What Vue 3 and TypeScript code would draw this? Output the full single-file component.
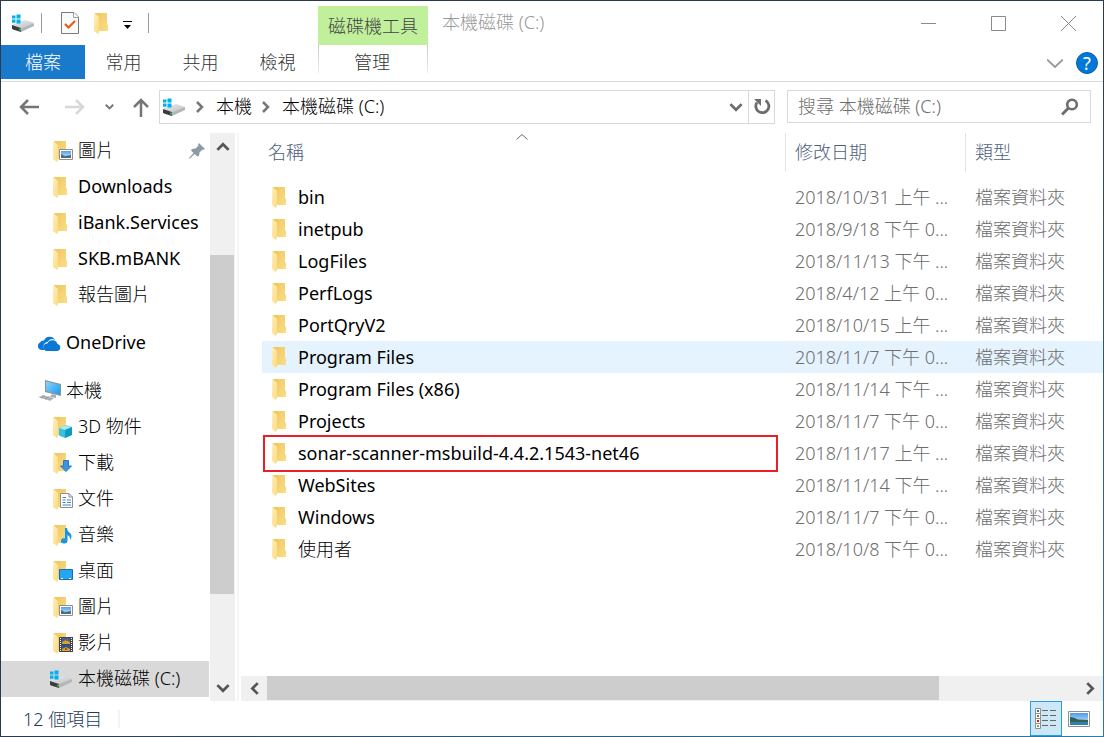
<script setup lang="ts">
import { ref } from 'vue'

interface TreeItem {
  label: string
  icon: string
  level: 1 | 2
  overlay?: string
  pinned?: boolean
  spaced?: boolean
  drive?: boolean
}

interface FileRow {
  name: string
  date: string
}

const menuTabs: string[] = ['常用', '共用', '檢視']

const tree: TreeItem[] = [
  { label: '圖片', icon: 'folder', level: 2, overlay: 'ov-picture', pinned: true },
  { label: 'Downloads', icon: 'folder', level: 2 },
  { label: 'iBank.Services', icon: 'folder', level: 2 },
  { label: 'SKB.mBANK', icon: 'folder', level: 2 },
  { label: '報告圖片', icon: 'folder', level: 2 },
  { label: 'OneDrive', icon: 'cloud', level: 1, spaced: true },
  { label: '本機', icon: 'pc', level: 1, spaced: true },
  { label: '3D 物件', icon: 'folder', level: 2, overlay: 'ov-cube' },
  { label: '下載', icon: 'folder', level: 2, overlay: 'ov-down' },
  { label: '文件', icon: 'folder', level: 2, overlay: 'ov-doc' },
  { label: '音樂', icon: 'folder', level: 2, overlay: 'ov-music' },
  { label: '桌面', icon: 'folder', level: 2, overlay: 'ov-desktop' },
  { label: '圖片', icon: 'folder', level: 2, overlay: 'ov-picture' },
  { label: '影片', icon: 'folder', level: 2, overlay: 'ov-film' },
  { label: '本機磁碟 (C:)', icon: 'drive', level: 2, drive: true },
]

const rows: FileRow[] = [
  { name: 'bin', date: '2018/10/31 上午 ...' },
  { name: 'inetpub', date: '2018/9/18 下午 0...' },
  { name: 'LogFiles', date: '2018/11/13 下午 ...' },
  { name: 'PerfLogs', date: '2018/4/12 上午 0...' },
  { name: 'PortQryV2', date: '2018/10/15 上午 ...' },
  { name: 'Program Files', date: '2018/11/7 下午 0...' },
  { name: 'Program Files (x86)', date: '2018/11/14 下午 ...' },
  { name: 'Projects', date: '2018/11/7 下午 0...' },
  { name: 'sonar-scanner-msbuild-4.4.2.1543-net46', date: '2018/11/17 上午 ...' },
  { name: 'WebSites', date: '2018/11/14 下午 ...' },
  { name: 'Windows', date: '2018/11/7 下午 0...' },
  { name: '使用者', date: '2018/10/8 下午 0...' },
]

const search = ref('')
const activeRow = ref('Program Files')
const markedRow = 'sonar-scanner-msbuild-4.4.2.1543-net46'

// Latin names need a heavier cut than Chinese ones to look equally dark.
const isLatin = (text: string): boolean => /^[\x20-\x7e]+$/.test(text)
</script>

<template>
  <div class="window">
    <svg class="sprite" aria-hidden="true">
      <defs>
        <linearGradient id="g-back" x1="0" y1="0" x2="1" y2="1">
          <stop offset="0" stop-color="#efc661" />
          <stop offset="1" stop-color="#fbdd86" />
        </linearGradient>
        <linearGradient id="g-front" x1="0" y1="0" x2="1" y2="1">
          <stop offset="0" stop-color="#fff0bd" />
          <stop offset="1" stop-color="#fbd97f" />
        </linearGradient>
        <linearGradient id="g-drive" x1="0" y1="0" x2="1" y2="1">
          <stop offset="0" stop-color="#eeeeef" />
          <stop offset="1" stop-color="#bcbec2" />
        </linearGradient>
        <linearGradient id="g-sky" x1="0" y1="0" x2="0" y2="1">
          <stop offset="0" stop-color="#4f9be8" />
          <stop offset="1" stop-color="#d9f0fb" />
        </linearGradient>
        <linearGradient id="g-screen" x1="0" y1="0" x2="1" y2="1">
          <stop offset="0" stop-color="#8ed3fb" />
          <stop offset="1" stop-color="#1a9bf0" />
        </linearGradient>
        <symbol id="folder" viewBox="0 0 14 21">
          <path d="M1 0H13V11L14 12V18H4Z" fill="url(#g-back)" />
          <path d="M0 0L4 3Q5 4 5 5V19L4 21L0 18Z" fill="url(#g-front)" />
        </symbol>
        <symbol id="drive" viewBox="0 0 23 18">
          <path d="M7 8L13 6L22 9L9 14L0 11Z" fill="url(#g-drive)" />
          <path d="M22 9V12L9 18V14Z" fill="#b4b6ba" />
          <path d="M0 11L9 14V18L1 15.500L0 14.500Z" fill="#3a3c3e" />
          <path d="M7 14.500H9V16.500H7Z" fill="#3fb54a" />
          <path d="M0 1.500H3.500V4.600H0ZM4.500 .5H8.500V4.600H4.500ZM0 5.600H3.500V8.800H0ZM4.500 5.600H8.500V9.600H4.500Z" fill="#00b0f0" />
        </symbol>
        <symbol id="cloud" viewBox="0 0 23 15">
          <path d="M4 14A4 4 0 0 1 2 6.500A4 4 0 0 1 6 4.500A6 6 0 0 1 17 4Q12.500 1.500 9.500 6Q5.500 6.500 5.500 10.500Q5.500 12.500 6.500 14Z" fill="#0a78d4" />
          <path d="M9 15A3.600 3.600 0 0 1 9.500 7.500A5.300 5.300 0 0 1 19.500 8A3.600 3.600 0 0 1 19.500 15Z" fill="#0a78d4" />
        </symbol>
        <symbol id="pc" viewBox="0 0 24 22">
          <path d="M7 0L23 4V16L7 12Z" fill="#8b939b" />
          <path d="M8 1.500L22 5V14.500L8 11Z" fill="url(#g-screen)" />
          <path d="M14 14L18 15V18L12 17Z" fill="#a9afb5" />
          <path d="M0 17L5 15L16 18L12 21Z" fill="#c5c9cd" />
          <path d="M2 17L13 20M4 16L15 19M3 18.500L7 15.500M7 19.500L11 16.500" stroke="#858c93" stroke-width=".6" />
        </symbol>
        <symbol id="ov-picture" viewBox="0 0 14 11">
          <path d="M.5 .5H13.500V10.500H.5Z" fill="#fff" stroke="#8f8f8f" />
          <path d="M2 2H12V9H2Z" fill="url(#g-sky)" />
          <path d="M2 5L6 7L12 6V9H2Z" fill="#4c6f7a" />
        </symbol>
        <symbol id="ov-cube" viewBox="0 0 13 13">
          <path d="M0 3L7 0L13 2V10L6 13L0 10.500Z" fill="#36c1dc" />
          <path d="M0 3L7 0L13 2L6 5Z" fill="#a5e9f2" />
          <path d="M6 5L13 2V10L6 13Z" fill="#0f9bc0" />
        </symbol>
        <symbol id="ov-down" viewBox="0 0 12 12">
          <path d="M3.500 .5H8.500V6H11.500L6 11.500L.5 6H3.500Z" fill="#3d94de" stroke="#2478c4" />
        </symbol>
        <symbol id="ov-doc" viewBox="0 0 13 15">
          <path d="M.5 .5H9L12.500 4V14.500H.5Z" fill="#fff" stroke="#8f8f8f" />
          <path d="M9 .5V4H12.500" fill="none" stroke="#8f8f8f" />
          <path d="M2.500 4.500H6M2.500 7H5.500M7 7H11M2.500 9.500H5.500M7 9.500H11M2.500 12H11" stroke="#3c86c9" />
        </symbol>
        <symbol id="ov-music" viewBox="0 0 11 16">
          <path d="M4 0H6Q6 3 9 5Q12 8 9 12Q9.500 8 6.500 7V13A3.300 2.600 0 1 1 4 10.300Z" fill="#1796e6" />
        </symbol>
        <symbol id="ov-desktop" viewBox="0 0 14 11">
          <path d="M.5 .5H13.500V10.500H.5Z" fill="#28a4f5" stroke="#176fae" />
          <path d="M2 9.500H4M10 9.500H12" stroke="#fff" />
        </symbol>
        <symbol id="ov-film" viewBox="0 0 14 15">
          <path d="M0 0H14V15H0Z" fill="#464646" />
          <path d="M3 1H11V7H3Z" fill="#3561a8" />
          <path d="M3 8H11V14H3Z" fill="#2d52a0" />
          <path d="M3 5L7 3L11 5V7H3ZM3 12L7 10L11 12V14H3Z" fill="#c9a72c" />
          <path d="M7 2H9V4H7ZM6 11H8V13H6Z" fill="#d83a2c" />
          <path d="M1.500 1V15M12.500 1V15" stroke="#fff" stroke-dasharray="1 1" />
        </symbol>
        <symbol id="pin" viewBox="0 0 16 16">
          <path d="M10 0L16 6L14 7L13.500 6.500L10.500 9.500L10 13L8.500 13.500L5.500 11L1 15.500L0 16L.5 14.500L4.500 10L2 7.500L3 6L6.500 5.500L9.500 2.500L9 2Z" fill="#8e9aa3" />
        </symbol>
        <symbol id="chev-up" viewBox="0 0 12 8"><path d="M1 7L6 2L11 7" fill="none" stroke="currentColor" stroke-width="2.500" /></symbol>
        <symbol id="chev-down" viewBox="0 0 12 8"><path d="M1 1L6 6L11 1" fill="none" stroke="currentColor" stroke-width="2.500" /></symbol>
        <symbol id="chev-left" viewBox="0 0 8 12"><path d="M7 1L2 6L7 11" fill="none" stroke="currentColor" stroke-width="2.500" /></symbol>
        <symbol id="chev-right" viewBox="0 0 8 12"><path d="M1 1L6 6L1 11" fill="none" stroke="currentColor" stroke-width="2.500" /></symbol>
        <symbol id="arrow-left" viewBox="0 0 20 16"><path d="M20 8H2M9 1L2 8L9 15" fill="none" stroke="currentColor" stroke-width="2.500" /></symbol>
      </defs>
    </svg>

    <header class="titlebar">
      <div class="quick">
        <svg class="i-drive"><use href="#drive" /></svg>
        <span class="bar"></span>
        <button type="button" class="quick-btn check" aria-label="內容">
          <svg width="18" height="22" viewBox="0 0 18 22">
            <path d="M.5 .5H13L17.500 5V21.500H.5Z" fill="#fafafa" stroke="#7b7b7b" />
            <path d="M12.500 .5V5.500H17.500" fill="#fff" stroke="#9b9b9b" />
            <path d="M4 12L7.500 15.500L14 9" fill="none" stroke="#ec5a14" stroke-width="2.200" />
          </svg>
        </button>
        <button type="button" class="quick-btn" aria-label="新增資料夾">
          <svg class="i-folder"><use href="#folder" /></svg>
        </button>
        <button type="button" class="quick-btn more" aria-label="自訂快速存取工具列">
          <svg width="10" height="9" viewBox="0 0 10 9"><path d="M0 .5H9" stroke="#000" /><path d="M1 4H8L4.500 8Z" /></svg>
        </button>
        <span class="bar last"></span>
      </div>
      <div class="context-title">磁碟機工具</div>
      <h1 class="title">本機磁碟 (C:)</h1>
      <div class="controls">
        <button type="button" aria-label="最小化"><svg width="15" height="15"><path d="M0 7.500H15" stroke="#8a8a8a" /></svg></button>
        <button type="button" aria-label="最大化"><svg width="15" height="15"><path d="M.5 .5H14.500V14.500H.5Z" fill="none" stroke="#8a8a8a" /></svg></button>
        <button type="button" aria-label="關閉"><svg width="15" height="15"><path d="M0 0L15 15M15 0L0 15" stroke="#8a8a8a" /></svg></button>
      </div>
    </header>

    <nav class="tabs" aria-label="功能區">
      <button type="button" class="tab file">檔案</button>
      <button v-for="tab in menuTabs" :key="tab" type="button" class="tab">{{ tab }}</button>
      <button type="button" class="tab context">管理</button>
      <button type="button" class="expand" aria-label="展開功能區">
        <svg width="16" height="9" viewBox="0 0 16 9"><path d="M0 .5L8 8L16 .5" fill="none" stroke="#9b9b9b" stroke-width="2" /></svg>
      </button>
      <button type="button" class="help" aria-label="說明">?</button>
    </nav>

    <div class="address-row">
      <div class="history">
        <button type="button" aria-label="上一頁"><svg class="i-arrow"><use href="#arrow-left" /></svg></button>
        <button type="button" class="off flip" aria-label="下一頁"><svg class="i-arrow"><use href="#arrow-left" /></svg></button>
        <button type="button" class="recent" aria-label="最近的位置"><svg class="i-recent"><use href="#chev-down" /></svg></button>
        <button type="button" class="up" aria-label="上一層">
          <svg width="18" height="20" viewBox="0 0 18 20"><path d="M9 20V3M2 10L9 3L16 10" fill="none" stroke="currentColor" stroke-width="2.500" /></svg>
        </button>
      </div>
      <div class="address">
        <svg class="i-drive"><use href="#drive" /></svg>
        <svg class="i-crumb"><use href="#chev-right" /></svg>
        <a href="#pc-root">本機</a>
        <svg class="i-crumb"><use href="#chev-right" /></svg>
        <a href="#drive-c">本機磁碟 (C:)</a>
        <button type="button" class="drop" aria-label="先前的位置"><svg class="i-wide"><use href="#chev-down" /></svg></button>
        <button type="button" class="refresh" aria-label="重新整理">
          <svg width="18" height="18" viewBox="0 0 18 18">
            <path d="M12.500 2.500A6.500 6.500 0 1 1 4 4.500" fill="none" stroke="#6d6d6d" stroke-width="2.800" />
            <path d="M1 1H8V8Z" fill="#6d6d6d" />
          </svg>
        </button>
      </div>
      <label class="search">
        <input v-model="search" type="text" aria-label="搜尋" placeholder="搜尋 本機磁碟 (C:)" />
        <svg width="18" height="18" viewBox="0 0 18 18">
          <circle cx="11" cy="6.500" r="4.800" fill="none" stroke="#6d6d6d" stroke-width="2.600" />
          <path d="M7.500 10L1 16.500" stroke="#6d6d6d" stroke-width="3" />
        </svg>
      </label>
    </div>

    <div class="body">
      <nav class="tree" aria-label="瀏覽窗格">
        <a
          v-for="(item, index) in tree"
          :key="index"
          href="#"
          class="node"
          :class="['level-' + item.level, { spaced: item.spaced, selected: item.drive }]"
        >
          <span class="node-icon">
            <svg :class="'i-' + item.icon"><use :href="'#' + item.icon" /></svg>
            <svg v-if="item.overlay" class="overlay" :class="item.overlay"><use :href="'#' + item.overlay" /></svg>
          </span>
          <span class="node-label" :class="{ latin: isLatin(item.label) }">{{ item.label }}</span>
          <svg v-if="item.pinned" class="i-pin"><use href="#pin" /></svg>
        </a>
      </nav>

      <div class="vscroll">
        <button type="button" aria-label="向上捲動"><svg class="i-wide"><use href="#chev-up" /></svg></button>
        <div class="vtrack"><div class="vthumb"></div></div>
        <button type="button" aria-label="向下捲動"><svg class="i-wide"><use href="#chev-down" /></svg></button>
      </div>
      <div class="splitter"></div>

      <main class="content">
        <div class="list">
          <table>
            <colgroup>
              <col />
              <col class="c-date" />
              <col class="c-type" />
            </colgroup>
            <thead>
              <tr>
                <th class="name">
                  <svg class="sort" viewBox="0 0 12 6"><path d="M.5 5.500L6 .5L11.500 5.500" fill="none" stroke="#6a6a6a" /></svg>
                  <button type="button">名稱</button>
                </th>
                <th><button type="button">修改日期</button></th>
                <th><button type="button">類型</button></th>
              </tr>
            </thead>
            <tbody>
              <tr v-for="row in rows" :key="row.name" :class="{ active: row.name === activeRow }" @click="activeRow = row.name">
                <td class="name">
                  <span class="file" :class="{ latin: isLatin(row.name) }"><svg class="i-folder"><use href="#folder" /></svg>{{ row.name }}</span>
                  <span v-if="row.name === markedRow" class="mark"></span>
                </td>
                <td>{{ row.date }}</td>
                <td>檔案資料夾</td>
              </tr>
            </tbody>
          </table>
        </div>
        <div class="hscroll">
          <button type="button" aria-label="向左捲動"><svg class="i-side"><use href="#chev-left" /></svg></button>
          <div class="htrack"><div class="hthumb"></div></div>
          <button type="button" aria-label="向右捲動"><svg class="i-side"><use href="#chev-right" /></svg></button>
        </div>
      </main>
    </div>

    <footer class="status">
      <span class="count">12 個項目</span>
      <div class="views">
        <button type="button" class="view on" aria-label="詳細資料">
          <svg width="22" height="22" viewBox="0 0 22 22">
            <path d="M.5 .5H5.500V5.500H.5ZM.5 5.500H5.500V10.500H.5ZM.5 10.500H5.500V15.500H.5ZM.5 15.500H5.500V20.500H.5Z" fill="#fff" stroke="#8f8f8f" />
            <path d="M2 2H4V4H2Z" fill="#2f77a8" /><path d="M2 7H4V9H2Z" fill="#a0673f" />
            <path d="M2 12H4V14H2Z" fill="#d01818" /><path d="M2 17H4V19H2Z" fill="#7fa860" />
            <path d="M7 2.500H13M15 2.500H21M7 7.500H13M15 7.500H21M7 12.500H13M15 12.500H21M7 17.500H13M15 17.500H21" stroke="#666" />
          </svg>
        </button>
        <button type="button" class="view" aria-label="大圖示">
          <svg width="22" height="16" viewBox="0 0 22 16">
            <path d="M.5 .5H21.500V15.500H.5Z" fill="#fff" stroke="#8f8f8f" />
            <path d="M2 2H20V14H2Z" fill="url(#g-sky)" />
            <path d="M2 6Q6 6 10 8.500L20 9V11H2Z" fill="#2f6252" />
            <path d="M2 11H20V14H2Z" fill="#347fae" />
          </svg>
        </button>
      </div>
    </footer>
  </div>
</template>

<style>
body {
  margin: 0;
}
</style>

<style scoped>
* {
  box-sizing: border-box;
}

.window {
  display: flex;
  flex-direction: column;
  min-height: 100vh;
  border: 1px solid;
  border-image: linear-gradient(to bottom right, #2b394d 50%, #2a7ba9) 1;
  background: #fff;
  color: #000;
  font: 300 18px/24px "Noto Sans", "Noto Sans CJK TC", sans-serif;
  overflow: hidden;
}

.sprite {
  position: absolute;
  width: 0;
  height: 0;
}

svg {
  display: block;
  flex: none;
}

button {
  display: flex;
  align-items: center;
  justify-content: center;
  padding: 0;
  border: 0;
  background: none;
  color: inherit;
  font: inherit;
}

a {
  color: inherit;
  text-decoration: none;
}

.latin {
  font-weight: 400;
}

.i-folder { width: 14px; height: 21px; }
.i-drive { width: 23px; height: 18px; }
.i-cloud { width: 23px; height: 15px; }
.i-pc { width: 24px; height: 22px; }
.i-arrow { width: 20px; height: 16px; }
.i-recent { width: 9px; height: 6px; }
.i-wide { width: 14px; height: 9px; }
.i-side { width: 9px; height: 13px; }
.i-crumb { width: 8px; height: 12px; }
.i-pin { width: 16px; height: 16px; }

.titlebar {
  display: flex;
  height: 44px;
}

.quick {
  display: flex;
  flex: 0 0 317px;
  align-items: center;
  padding-left: 11px;
}

.bar {
  width: 1px;
  height: 20px;
  margin: 0 19px 0 6px;
  background: #9b9b9b;
}

.bar.last {
  margin: 0;
}

.quick-btn {
  margin-right: 15px;
}

.quick-btn.more {
  margin-top: 4px;
}

.context-title {
  flex: 0 0 110px;
  margin-top: 5px;
  background: #c1f09d;
  color: #444;
  line-height: 40px;
  text-align: center;
}

.title {
  flex: 1;
  margin: 0;
  padding-left: 14px;
  color: #999;
  font-size: 18px;
  font-weight: 300;
  line-height: 42px;
}

.controls {
  display: flex;
}

.controls button {
  width: 70px;
}

.tabs {
  display: flex;
  height: 37px;
  border-bottom: 1px solid #dadbdc;
}

.tab {
  width: 77px;
  height: 34px;
  color: #333;
}

.tab.file {
  width: 84px;
  background: #1979ca;
  color: #fff;
}

.tab.context {
  width: 110px;
  height: 28px;
  margin-left: 2px;
  padding: 6px 2px 0 0;
  border: 1px solid;
  border-width: 0 1px;
  border-image: linear-gradient(#c8c8c8, #f0f0f0) 1;
}

.expand {
  margin-left: auto;
}

.help {
  width: 22px;
  height: 22px;
  margin: 7px 5px 0 13px;
  border: 1px solid #0a5fae;
  border-radius: 50%;
  background: #0078d7;
  color: #fff;
  font-weight: 400;
}

.address-row {
  display: flex;
  padding: 8px 12px 9px 0;
}

.history {
  display: flex;
  flex: 0 0 158px;
  align-items: center;
  padding-left: 18px;
  color: #767676;
}

.history button {
  margin-right: 26px;
}

.history .off {
  margin-right: 20px;
  color: #d8d8d8;
}

.history .flip svg {
  transform: scaleX(-1);
}

.history .recent {
  margin-right: 18px;
}

.history .up {
  margin: 0;
}

.address {
  display: flex;
  flex: 1;
  align-items: center;
  height: 34px;
  padding-left: 3px;
  border: 1px solid #d9d9d9;
}

.address > a {
  padding-bottom: 2px;
}

.address > .i-crumb {
  margin: 0 12px 0 10px;
  color: #767676;
}

.address > .drop {
  width: 24px;
  height: 32px;
  margin-left: auto;
  color: #6d6d6d;
}

.refresh {
  width: 26px;
  height: 32px;
  border-left: 1px solid #d9d9d9;
}

.search {
  display: flex;
  flex: 0 1 304px;
  align-items: center;
  height: 33px;
  margin-left: 12px;
  padding: 0 11px 0 10px;
  border: 1px solid #d9d9d9;
}

.search input {
  flex: 1;
  min-width: 0;
  padding: 0 0 2px;
  border: 0;
  outline: 0;
  background: none;
  font: inherit;
}

.search input::placeholder {
  color: #6d6d6d;
  opacity: 1;
}

.body {
  display: flex;
  flex: 1;
}

.tree {
  flex: 0 0 208px;
  padding-bottom: 4px;
}

.node {
  display: flex;
  align-items: center;
  height: 36px;
}

.node.spaced {
  margin: 12px 0;
}

.node.spaced + .node.spaced {
  margin: 0;
}

.node.selected {
  background: #d9d9d9;
}

.node-icon {
  position: relative;
  display: flex;
  flex: none;
}

.level-1 .node-icon {
  width: 28px;
  margin-left: 37px;
}

.level-2 .node-icon {
  width: 25px;
  margin-left: 52px;
}

.selected.level-2 .node-icon {
  width: 28px;
  margin-left: 49px;
}

.node-label {
  flex: 1;
  padding-bottom: 2px;
  white-space: nowrap;
}

.node .i-pin {
  margin-right: 4px;
}

.overlay {
  position: absolute;
  bottom: 2px;
  left: 6px;
}

.ov-picture, .ov-desktop { width: 14px; height: 11px; }
.ov-cube { bottom: 0; width: 13px; height: 13px; }
.ov-down { left: 7px; width: 12px; height: 12px; }
.ov-doc { left: 7px; width: 13px; height: 15px; }
.ov-music { left: 8px; width: 11px; height: 16px; }
.ov-film { width: 14px; height: 15px; }

.vscroll {
  display: flex;
  flex: 0 0 25px;
  flex-direction: column;
  margin-left: 1px;
  background: #f0f0f0;
  color: #555;
}

.vscroll button {
  height: 26px;
}

.vtrack {
  display: grid;
  flex: 1;
  grid-template-rows: 96fr 339fr 81fr;
}

.vthumb {
  grid-row: 2;
  margin-right: 1px;
  background: #cdcdcd;
}

.splitter {
  width: 2px;
  margin: 0 2px;
  background: #f5f5f5;
}

.content {
  display: flex;
  flex: 1;
  flex-direction: column;
  min-width: 0;
}

.list {
  flex: 1;
  padding-left: 21px;
}

table {
  width: 100%;
  border-collapse: collapse;
  table-layout: fixed;
}

.c-date { width: 180px; }
.c-type { width: 138px; }

th {
  position: relative;
  height: 48px;
  padding: 0;
  font-weight: 300;
  vertical-align: top;
}

th button {
  width: 100%;
  height: 39px;
  padding: 0 0 2px 9px;
  border-left: 1px solid #e5e5e5;
  color: #4c607a;
  justify-content: flex-start;
}

th.name button {
  padding-left: 6px;
  border: 0;
}

.sort {
  position: absolute;
  top: 1px;
  right: 4px;
  left: 0;
  width: 12px;
  height: 6px;
  margin: 0 auto;
}

td {
  position: relative;
  height: 32px;
  padding: 0 0 0 10px;
  color: #6d6d6d;
  white-space: nowrap;
}

td.name {
  color: #000;
}

.file {
  display: flex;
  align-items: center;
  gap: 12px;
}

tr.active {
  background: #e5f3ff;
}

.mark {
  position: absolute;
  inset: -2px 7px -3px 1px;
  border: 2px solid #e81f27;
}

.hscroll {
  display: flex;
  height: 25px;
  background: #f0f0f0;
  color: #555;
}

.hscroll button {
  width: 26px;
}

.htrack {
  flex: 1;
}

.hthumb {
  width: 83%;
  height: 24px;
  background: #cdcdcd;
}

.status {
  display: flex;
  height: 35px;
  align-items: center;
  padding-left: 22px;
  color: #1e395b;
}

.count {
  padding-right: 16px;
  border-right: 2px solid #f3f3f3;
  line-height: 18px;
}

.views {
  display: flex;
  align-self: stretch;
  margin-left: auto;
  padding-right: 7px;
}

.view {
  width: 34px;
}

.view.on {
  width: 32px;
  border: 1px solid #26a0da;
  background: #cce8f6;
}
</style>
